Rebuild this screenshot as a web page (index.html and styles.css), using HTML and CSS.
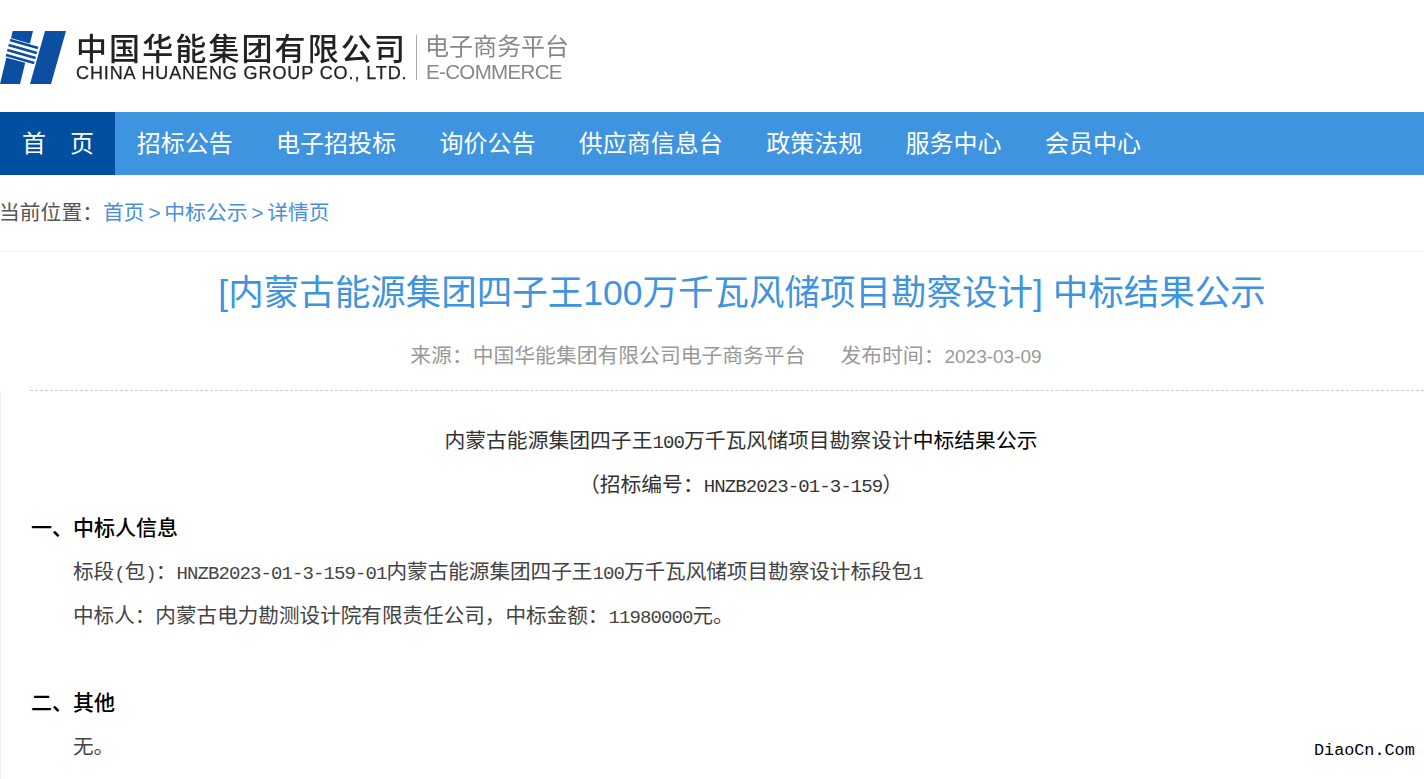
FILE: index.html
```html
<!DOCTYPE html>
<html lang="zh-CN">
<head>
<meta charset="utf-8">
<title>中标结果公示</title>
<link rel="stylesheet" href="styles.css">
</head>
<body>
<header class="top">
  <svg class="mark" width="67" height="54" viewBox="0 0 67 54">
    <path fill="#0b4ea2" d="M12.7 0H33L20 53H0ZM45 0H66L51 53H30Z"/>
    <path fill="#fff" d="M9 6.5 38 15 33.500 34 4 26Z"/>
    <path fill="none" stroke="#0b4ea2" stroke-width="2.6" d="M10 9 38 17M8.500 14 36.800 22M7.300 19 35.600 27M6 24 34.300 32"/>
  </svg>
  <div class="brand">
    <div class="brand-cn">中国华能集团有限公司</div>
    <div class="brand-en">CHINA HUANENG GROUP CO., LTD.</div>
  </div>
  <div class="platform">
    <div class="platform-cn">电子商务平台</div>
    <div class="platform-en">E-COMMERCE</div>
  </div>
</header>
<nav class="nav">
  <a class="nav-item nav-home">首　页</a>
  <a class="nav-item">招标公告</a>
  <a class="nav-item">电子招投标</a>
  <a class="nav-item">询价公告</a>
  <a class="nav-item">供应商信息台</a>
  <a class="nav-item">政策法规</a>
  <a class="nav-item">服务中心</a>
  <a class="nav-item">会员中心</a>
</nav>
<div class="crumbs">当前位置：<a>首页</a><span class="sep">&gt;</span><a>中标公示</a><span class="sep">&gt;</span><a>详情页</a></div>
<h1 class="title">[内蒙古能源集团四子王100万千瓦风储项目勘察设计] 中标结果公示</h1>
<div class="meta"><span>来源：中国华能集团有限公司电子商务平台</span><span>发布时间：<span class="date">2023-03-09</span></span></div>
<main class="article">
  <p class="center">内蒙古能源集团四子王<span class="l">100</span>万千瓦风储项目勘察设计<span class="dark">中标结果公示</span></p>
  <p class="center">（招标编号：<span class="l">HNZB2023-01-3-159</span>）</p>
  <p class="head">一、中标人信息</p>
  <p class="indent">标段<span class="l">(</span>包<span class="l">)</span>：<span class="l">HNZB2023-01-3-159-01</span>内蒙古能源集团四子王<span class="l">100</span>万千瓦风储项目勘察设计标段包<span class="l">1</span></p>
  <p class="indent">中标人：内蒙古电力勘测设计院有限责任公司，中标金额：<span class="l">11980000</span>元。</p>
  <p class="blank">&nbsp;</p>
  <p class="head">二、其他</p>
  <p class="indent">无。</p>
</main>
<div class="watermark">DiaoCn.Com</div>
</body>
</html>
```
FILE: styles.css
```css
html, body { margin: 0; padding: 0; }
body {
  background: #fff;
  color: #333;
  font-family: "Liberation Sans", "Noto Sans CJK SC", sans-serif;
  height: 779px;
  overflow: hidden;
  position: relative;
}
a { color: inherit; text-decoration: none; }

.top { display: flex; align-items: flex-start; height: 112px; box-sizing: border-box; padding-top: 31px; }
.mark { flex: none; margin-right: 9px; filter: blur(.4px); }
.brand { width: 331px; margin-top: 2px; filter: blur(.35px); }
.brand-cn { font-size: 31px; line-height: 33px; letter-spacing: 2.1px; font-weight: 500; color: #222; white-space: nowrap; }
.brand-en { font-size: 18px; line-height: 14px; color: #222; letter-spacing: .9px; white-space: nowrap; -webkit-text-stroke: .25px #222; }
.platform { margin: 4px 0 0 9px; padding-left: 8px; border-left: 1px solid #aaa; height: 45px; filter: blur(.35px); }
.platform-cn { font-size: 24px; line-height: 28px; color: #888; white-space: nowrap; margin-top: -2px; }
.platform-en { font-size: 20.5px; line-height: 24px; letter-spacing: -.65px; margin-left: 1px; color: #888; white-space: nowrap; margin-top: -1px; }

.nav { display: flex; height: 63px; background: #3f94df; }
.nav-item { color: #fff; font-size: 24px; line-height: 64px; padding: 0 21.7px; white-space: nowrap; }
.nav-home { background: #034f9f; width: 115px; box-sizing: border-box; padding: 0 0 0 22px; }

.crumbs { height: 77px; line-height: 76px; margin-left: -1px; border-bottom: 1px solid #f2f2f2; font-size: 20.8px; color: #555; white-space: nowrap; box-sizing: border-box; }
.crumbs a { color: #4a90d9; }
.sep { color: #4a90d9; margin: 0 3.8px; }

.title { margin: 0; padding: 16px 0 0 60px; font-size: 35.500px; line-height: 50px; font-weight: 400; color: #3f94df; text-align: center; white-space: nowrap; }
.meta { display: flex; justify-content: center; gap: 35px; padding: 23px 0 0 28px; height: 45px; font-size: 20.8px; line-height: 30px; color: #999; white-space: nowrap; }
.date { font-size: 19px; }

.article { margin-top: 4px; border-top: 1px dashed #ccc; margin-left: 30px; padding-top: 27px; }
.article::before { content: ""; position: absolute; left: 0; top: 390px; bottom: 0; width: 1px; background: #f2f2f2; }
.article p { margin: 0; font-family: "Noto Sans CJK SC", sans-serif; font-size: 20.8px; line-height: 43.7px; white-space: nowrap; }
.l { font-family: "Liberation Mono", monospace; font-size: 19px; letter-spacing: -.9px; line-height: 1; }
.article .center { text-align: center; padding-left: 28px; }
.dark { color: #000; }
.article .head { color: #000; font-weight: 500; font-size: 21px; margin-left: 1px; }
.article .indent { margin-left: 43px; color: #444; font-size: 20.6px; }
.watermark { position: absolute; right: 0; top: 734px; width: 110px; height: 34px; background: #fff; font-family: "Liberation Mono", monospace; font-size: 16.8px; line-height: 34px; color: #000; white-space: nowrap; }
```
